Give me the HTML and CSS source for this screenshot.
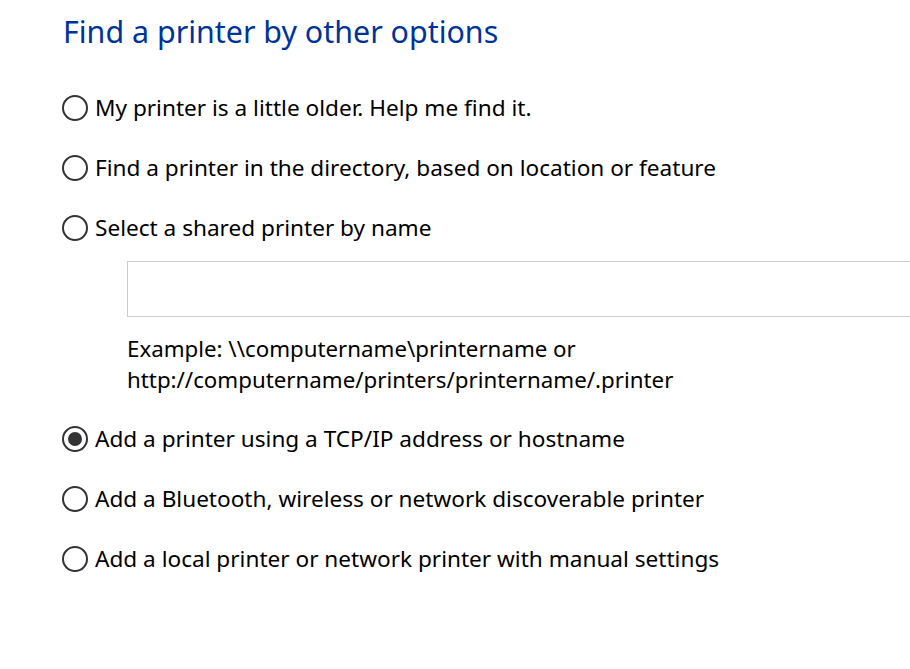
FILE: index.html
```html
<!DOCTYPE html>
<html>
<head>
<meta charset="utf-8">
<link rel="stylesheet" href="styles.css">
</head>
<body>
<div class="page">
  <h1 class="title">Find a printer by other options</h1>
  <div class="options">
    <label class="opt"><span class="radio"></span><span class="label">My printer is a little older. Help me find it.</span></label>
    <label class="opt"><span class="radio"></span><span class="label">Find a printer in the directory, based on location or feature</span></label>
    <label class="opt"><span class="radio"></span><span class="label">Select a shared printer by name</span></label>
    <div class="shared">
      <div class="input"></div>
      <p class="example">Example: \\computername\printername or<br>http://computername/printers/printername/.printer</p>
    </div>
    <label class="opt"><span class="radio checked"></span><span class="label">Add a printer using a TCP/IP address or hostname</span></label>
    <label class="opt"><span class="radio"></span><span class="label">Add a Bluetooth, wireless or network discoverable printer</span></label>
    <label class="opt"><span class="radio"></span><span class="label">Add a local printer or network printer with manual settings</span></label>
  </div>
</div>
</body>
</html>
```
FILE: styles.css
```css
html, body {
  margin: 0;
  padding: 0;
  background: #fff;
  overflow: hidden;
}
body {
  width: 910px;
  height: 669px;
  font-family: "Noto Sans", "Open Sans", sans-serif;
  color: #000;
}
.page {
  padding: 12px 0 0 62px;
}
.title {
  margin: 0 0 0 1px;
  font-size: 30.4px;
  font-weight: 400;
  color: #003399;
  line-height: 40px;
}
.options {
  margin-top: 26px;
  display: flex;
  flex-direction: column;
}
.opt {
  display: flex;
  align-items: center;
  height: 60px;
}
.radio {
  box-sizing: border-box;
  width: 26px;
  height: 26px;
  border: 2px solid #333;
  border-radius: 50%;
  margin-right: 7px;
  display: flex;
  align-items: center;
  justify-content: center;
}
.radio.checked::after {
  content: "";
  width: 14px;
  height: 14px;
  border-radius: 50%;
  background: #333;
}
.label {
  font-size: 22.6px;
  line-height: 30px;
}
.shared {
  padding-left: 65px;
  margin-bottom: 14px;
}
.input {
  margin-top: 3px;
  height: 56px;
  box-sizing: border-box;
  border: 1px solid #cccccc;
  border-right: none;
}
.example {
  margin: 16px 0 0;
  font-size: 22.3px;
  line-height: 31px;
}
```
